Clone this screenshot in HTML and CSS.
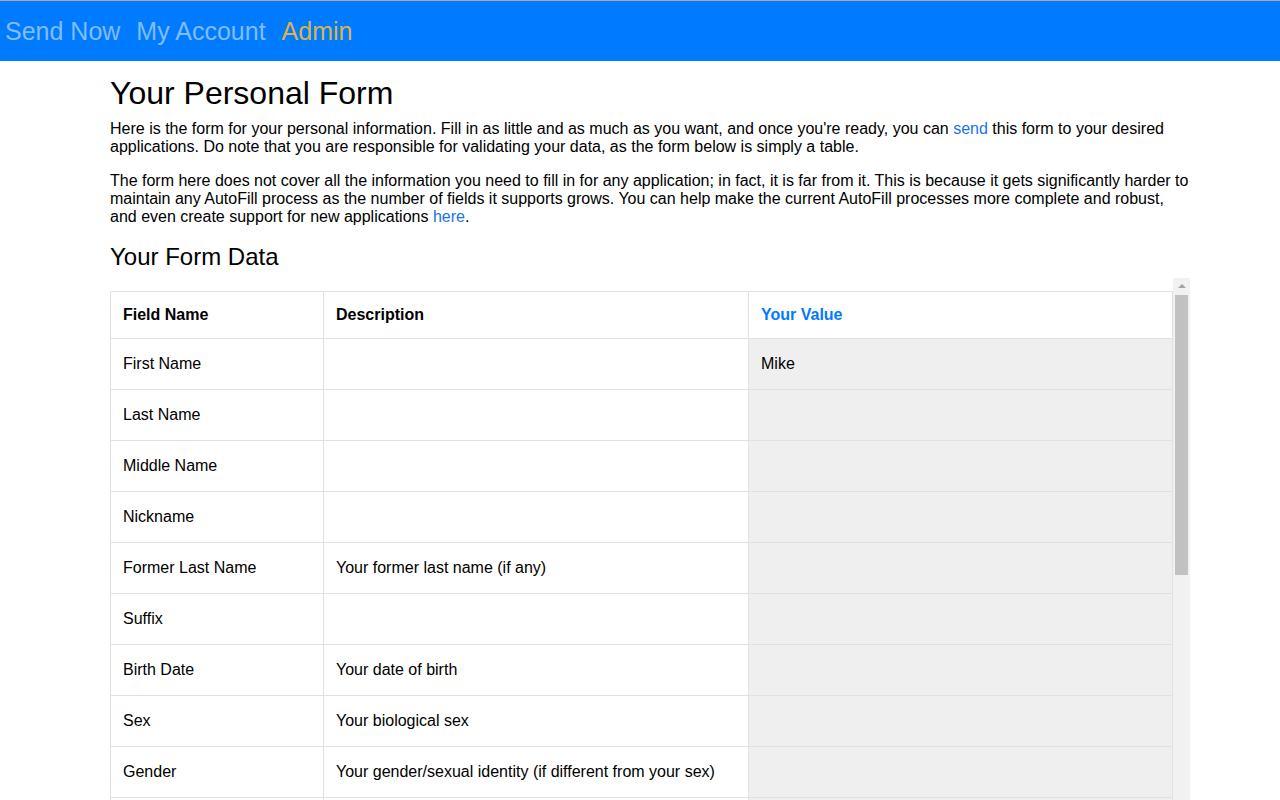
FILE: index.html
```html
<!DOCTYPE html>
<html lang="en">
<head>
<meta charset="utf-8">
<title>Your Personal Form</title>
<link rel="stylesheet" href="styles.css">
</head>
<body>
<nav class="navbar">
  <a class="nav-link" href="#">Send Now</a>
  <a class="nav-link" href="#">My Account</a>
  <a class="nav-link nav-admin" href="#">Admin</a>
</nav>
<main class="content">
  <h1 class="title">Your Personal Form</h1>
  <p class="text">Here is the form for your personal information. Fill in as little and as much as you want, and once you're ready, you can <a class="link" href="#">send</a> this form to your desired applications. Do note that you are responsible for validating your data, as the form below is simply a table.</p>
  <p class="text">The form here does not cover all the information you need to fill in for any application; in fact, it is far from it. This is because it gets significantly harder to maintain any AutoFill process as the number of fields it supports grows. You can help make the current AutoFill processes more complete and robust, and even create support for new applications <a class="link" href="#">here</a>.</p>
  <h2 class="subtitle">Your Form Data</h2>
  <div class="table-wrap">
    <div class="table-area">
      <table class="form-table">
        <thead>
          <tr>
            <th class="col-name">Field Name</th>
            <th class="col-desc">Description</th>
            <th class="col-value">Your Value</th>
          </tr>
        </thead>
        <tbody>
          <tr><td>First Name</td><td></td><td class="value">Mike</td></tr>
          <tr><td>Last Name</td><td></td><td class="value"></td></tr>
          <tr><td>Middle Name</td><td></td><td class="value"></td></tr>
          <tr><td>Nickname</td><td></td><td class="value"></td></tr>
          <tr><td>Former Last Name</td><td>Your former last name (if any)</td><td class="value"></td></tr>
          <tr><td>Suffix</td><td></td><td class="value"></td></tr>
          <tr><td>Birth Date</td><td>Your date of birth</td><td class="value"></td></tr>
          <tr><td>Sex</td><td>Your biological sex</td><td class="value"></td></tr>
          <tr><td>Gender</td><td>Your gender/sexual identity (if different from your sex)</td><td class="value"></td></tr>
          <tr><td>Email</td><td>Your primary email address</td><td class="value"></td></tr>
        </tbody>
      </table>
    </div>
    <div class="scrollbar" aria-hidden="true">
      <div class="scroll-arrow"></div>
      <div class="scroll-thumb"></div>
    </div>
  </div>
</main>
</body>
</html>
```

FILE: styles.css
```css
html, body {
  overflow: hidden;
  height: 100%;
}
body {
  margin: 0;
  font-family: "Liberation Sans", Arial, sans-serif;
  font-size: 16px;
  color: #000;
  background: #fff;
}
.navbar {
  display: flex;
  align-items: center;
  gap: 16px;
  height: 60px;
  padding-left: 5px;
  background: #007bff;
  border-top: 1px solid #a9a9a9;
}
.nav-link {
  font-size: 25px;
  color: #80bdff;
  text-decoration: none;
}
.nav-admin {
  color: #d9b44a;
}
.content {
  margin: 0 90px 0 110px;
  padding-top: 13px;
}
.title {
  font-size: 32px;
  font-weight: 400;
  line-height: 1.2;
  margin: 0 0 8px;
}
.text {
  margin: 0 0 16px;
  line-height: 18px;
}
.link {
  color: #1a73e8;
  text-decoration: none;
}
.subtitle {
  font-size: 24px;
  font-weight: 400;
  line-height: 1.2;
  margin: 17px 0 0;
}
.table-wrap {
  display: flex;
  margin-top: 6px;
  height: 600px;
  overflow: hidden;
}
.table-area {
  flex: 1;
  min-width: 0;
  padding-top: 13px;
}
.scrollbar {
  flex: 0 0 17px;
  display: flex;
  flex-direction: column;
  background: #f1f1f1;
}
.scroll-arrow {
  height: 17px;
  display: flex;
  align-items: center;
  justify-content: center;
}
.scroll-arrow::before {
  content: "";
  width: 0;
  height: 0;
  border-left: 4px solid transparent;
  border-right: 4px solid transparent;
  border-bottom: 4px solid #a3a3a3;
  margin-top: -1px;
}
.scroll-thumb {
  height: 280px;
  margin: 0 2px;
  background: #c1c1c1;
}
.form-table {
  width: 100%;
  border-collapse: collapse;
  table-layout: fixed;
}
.form-table th,
.form-table td {
  box-sizing: border-box;
  border: 1px solid #dee2e6;
  padding: 0 12px;
  text-align: left;
  vertical-align: middle;
  line-height: 24px;
}
.form-table th {
  height: 47px;
  font-weight: 700;
}
.form-table td {
  height: 51px;
}
.col-name { width: 213px; }
.col-desc { width: 425px; }
.col-value {
  color: #007bff;
}
.form-table td.value {
  background: #efefef;
}
```
